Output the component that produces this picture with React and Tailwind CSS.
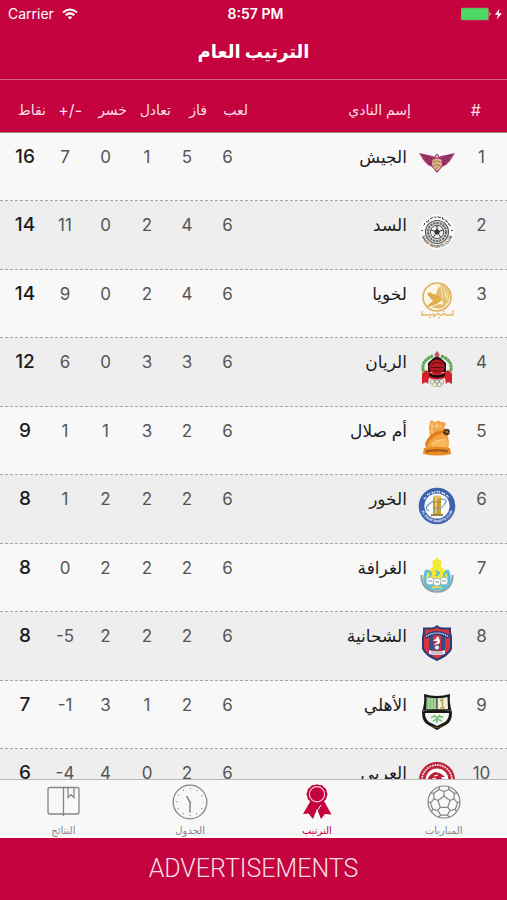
import React from "react";

function Logo({ label, children }) {
  return (
    <svg viewBox="0 0 38 38" className="mx-auto block size-[38px]" role="img" aria-label={label}>
      {children}
    </svg>
  );
}

function ElJaish() {
  return (
    <Logo label="الجيش">
      <path d="M1 8 L15 11 L17 12 L19 8 L21 12 L23 11 L37 8 L32 16 L28 20 L24 22 L19 28 L14 22 L10 20 L6 16 Z" fill="#a33a6c" />
      <path d="M4 10 L14 14 M7 14 L14 17 M10 18 L14 19 M34 10 L24 14 M31 14 L24 17 M28 18 L24 19" stroke="#7d2450" strokeWidth="1" />
      <circle cx="19" cy="12" r="2.4" fill="#b0527c" />
      <circle cx="19" cy="11.5" r="1" fill="#f0dde4" />
      <path d="M14.5 15 Q19 12.500 23.500 15 L24 20 Q22 24 19 26 Q16 24 14 20 Z" fill="#d9b48a" />
      <path d="M15 17 Q19 15 23 17 M15.500 21 Q19 18 22.500 21 M18 24 L20 22" stroke="#a5683f" strokeWidth=".8" fill="none" />
    </Logo>
  );
}

function AlSadd() {
  return (
    <Logo label="السد">
      <defs>
        <path id="sadd-low" d="M3.200 19 A15.800 15.800 0 0 0 34.800 19" />
      </defs>
      <circle cx="19" cy="19" r="17.500" fill="#fbfbfb" />
      <circle cx="19" cy="19" r="11.500" fill="#d5d5d5" stroke="#5a5a5a" strokeWidth="1.200" />
      <circle cx="19" cy="19" r="9" fill="none" stroke="#666" strokeWidth="2" strokeDasharray="2.200 1" />
      <circle cx="19" cy="19" r="6.600" fill="#f1f1f1" stroke="#444" strokeWidth=".9" />
      <path d="M19 15.800 L22 18 L20.900 21.500 H17.100 L16 18 Z" fill="#333" />
      <path d="M19 16 V12.500 M22 18 L25.200 17 M20.800 21.500 L22.800 24.300 M17.200 21.500 L15.200 24.300 M16 18 L12.800 17" stroke="#333" strokeWidth="1" />
      <text fontSize="4" fontWeight="700" fontFamily="Liberation Sans, sans-serif" fill="#3d3d3d">
        <textPath href="#sadd-low" startOffset="50%" textAnchor="middle">SADD SPORTS CLUB</textPath>
      </text>
      <path d="M5.500 12.500 q1.500 -1 1 -2.500 M8 8.500 l2 .5 1 -2.500 M12 5.500 q2 1 2.500 -1.500 M16 3.500 q.5 2 2.500 .5 M20 3 l.5 1.500 2.500 -.2 M24.500 4 l0 2 2 .5 M28 6.500 l0 2 2 .5 M30.500 10 l.5 2 1.800 .5" fill="none" stroke="#444" strokeWidth="1" />
      <circle cx="4" cy="17.500" r=".8" fill="#333" />
      <circle cx="34" cy="17.500" r=".8" fill="#333" />
    </Logo>
  );
}

function Lekhwiya() {
  return (
    <Logo label="لخويا">
      <circle cx="19" cy="15" r="14" fill="#fbf5e6" stroke="#dfb057" strokeWidth="1.600" />
      <path d="M18 13 Q19 7 22 4 L24 2 Q30 5 31.500 12 Q32 18 28 23 L23 27 Q26 21 24 18 Z" fill="#e7bf70" />
      <path d="M23 4 L25 16 M26 4.500 L28 16 M29 9 L29 18" stroke="#fbf0d2" strokeWidth=".7" />
      <path d="M9 12 L12 10 L15 12 L20 13 L24 18 L19 22 L13 24 L8 26 L11 22 L15 19 Z" fill="#e0ac4c" />
      <path d="M13 25 L22 22 L27 24 L21 27 Z" fill="#e5ba66" />
      <path d="M35 28 V33 H27 Q27 31 25.500 31.500 Q24 34 21.500 33 Q20 30 18 33 L15.500 35 Q17.500 33 15.500 32 L14 33 H4 V29" fill="none" stroke="#e2b65f" strokeWidth="1.300" />
      <path d="M25 29.500 h1.200 M20 35.500 h2 M11 35.500 h2" stroke="#e2b65f" strokeWidth="1.200" />
    </Logo>
  );
}

function AlRayyan() {
  return (
    <Logo label="الريان">
      <path d="M15 6 C3 10 3 20 8 26" fill="none" stroke="#58a54c" strokeWidth="3" strokeDasharray="3 .4" />
      <path d="M23 6 C35 10 35 20 30 26" fill="none" stroke="#58a54c" strokeWidth="3" strokeDasharray="3 .4" />
      <path d="M19 1 L21.500 4 L21 8 H17 L16.500 4 Z" fill="#c55a6c" />
      <path d="M15.500 8 Q19 6 22.500 8 L28 13 V22 H10 V13 Z" fill="#2a1313" />
      <circle cx="19" cy="17" r="7.600" fill="#b81a22" />
      <path d="M14 14 Q19 11 24 14 M13 17.500 H25 M15 21 H23" stroke="#541013" strokeWidth="1.200" fill="none" />
      <path d="M8 20 Q19 28 30 20 L34 24 L34 34 L30 32 L28 34 L27 28 Q19 31 11 28 L10 34 L8 32 L4 34 L4 24 Z" fill="#d5202a" />
      <path d="M11 23 Q19 27.500 27 23 L27 26 Q19 30 11 26 Z" fill="#221010" />
      <g fill="#fff" fillOpacity=".6" strokeWidth=".8">
        <circle cx="14.500" cy="32" r="2.300" stroke="#6f8b95" />
        <circle cx="19" cy="32" r="2.300" stroke="#555" />
        <circle cx="23.500" cy="32" r="2.300" stroke="#bf6a6a" />
        <circle cx="16.800" cy="34.300" r="2.300" stroke="#b5a55e" />
        <circle cx="21.200" cy="34.300" r="2.300" stroke="#629867" />
      </g>
    </Logo>
  );
}

function UmmSalal() {
  return (
    <Logo label="أم صلال">
      <path d="M12 3 L14 1 L16 3 L18 3 L20 1 L22 3 L26 3 L28 5 L26 9 L27 13 L30 17 L31 24 L30 30 H8 L7 24 L12 17 L11 9 Z" fill="#f3a545" />
      <path d="M14 7 H24 M14 4 V14 M19 4 V10 M14 25 Q20 20 28 21" stroke="#fbd48f" strokeWidth="1.200" fill="none" />
      <path d="M30 13 Q19 9 11 18 Q5 25 9 29 Q10 21 18 17 Q24 14 30 13" fill="#e47d1f" />
      <path d="M13 28 Q20 20 30 22 L29 28 Z" fill="#f9b95a" />
      <circle cx="28.500" cy="13" r="3.200" fill="#3c2411" />
      <path d="M28.500 10 L29.500 13 L27 15 M26 12 L31 14" stroke="#d59b4f" strokeWidth=".7" fill="none" />
      <path d="M6 29 Q19 26 32 29 L33 35 Q19 38 5 35 Z" fill="#e98b27" />
      <path d="M8 32.500 Q19 30 30 32.500" stroke="#8e4a12" strokeWidth="2.400" strokeDasharray="1.300 .5" fill="none" />
    </Logo>
  );
}

function AlKhor() {
  return (
    <Logo label="الخور">
      <defs>
        <path id="khor-low" d="M2.800 19 A16.200 16.200 0 0 0 35.200 19" />
      </defs>
      <circle cx="19" cy="19" r="18.300" fill="#3d62ae" />
      <circle cx="19" cy="19" r="12.600" fill="#f8f9fa" />
      <path d="M6 12 L8 10 M9 8 L12 6.500 M13.500 6 L17 5 M18.500 4.500 L22 5 M23.500 5.500 L27 7 M28.500 8 L30.500 10.500" stroke="#e8eef9" strokeWidth="1.700" strokeDasharray="1.600 .6" />
      <text fontSize="3.400" fontWeight="700" fontFamily="Liberation Sans, sans-serif" fill="#edf3ff">
        <textPath href="#khor-low" startOffset="50%" textAnchor="middle">AL KHOR SPORTS CLUB</textPath>
      </text>
      <path d="M11 24 Q6 22 10 18 Q15 13 24 12 Q30 12 27 17" fill="none" stroke="#6c8fd0" strokeWidth="1.200" />
      <rect x="15" y="10" width="8" height="17" fill="#c4a032" />
      <ellipse cx="19" cy="10" rx="4" ry="1.400" fill="#ddc36a" />
      <path d="M18 11 V26" stroke="#ecd98a" strokeWidth="1.600" />
      <path d="M15 15 H23 M15 21 H23" stroke="#967420" strokeWidth=".7" />
      <rect x="13" y="27" width="12" height="2" fill="#97844c" />
      <path d="M16 24 Q25 22 28 14" fill="none" stroke="#8aaddb" strokeWidth="1.100" />
    </Logo>
  );
}

function AlGharafa() {
  return (
    <Logo label="الغرافة">
      <path d="M7 14 Q2 29 11 33 Q19 36 27 33 Q36 29 31 14 Z" fill="#5fc0dd" />
      <path d="M3.500 19 Q3 30 11 34 Q19 37.500 27 34 Q35 30 34.500 19" fill="none" stroke="#8fa2a6" strokeWidth="2" />
      <path d="M10 15 L14 12 L15 10 Q13 5 17 3.500 L19 1 L21 3.500 Q25 5 23 10 L24 12 L28 15 L30 22 L25 27 H12 L8 22 Z" fill="#f6e936" />
      <path d="M9 14 L13 17 L12 21 M29 15 L26 18 L27 22 M18 15 L21 17 L18 20" stroke="#53b8d8" strokeWidth="1.800" fill="none" />
      <g fill="#f8fafa" stroke="#8fa3a8" strokeWidth=".7">
        <circle cx="12" cy="25" r="4" />
        <circle cx="26" cy="25" r="4" />
        <circle cx="19" cy="26" r="4" />
      </g>
      <path d="M10 25 H14 M17 26 H21 M24 25 H28" stroke="#819398" strokeWidth="1" />
      <path d="M14 32 Q19 30 24 32" stroke="#e4d84e" strokeWidth="2" fill="none" />
    </Logo>
  );
}

function AlShahaniya() {
  return (
    <Logo label="الشحانية">
      <path d="M19 1 Q22 4 26 3.500 H33 V8 L34 13 V25 Q31 32 19 37 Q7 32 4 25 V13 L5 8 V3.500 H12 Q16 4 19 1 Z" fill="#263e77" />
      <path d="M19 3.500 Q22 6 27 5.500 H31 V9 L32 13 V24.500 Q29 30 19 34.700 Q9 30 6 24.500 V13 L7 9 V5.500 H11 Q16 6 19 3.500 Z" fill="#d8333f" />
      <path d="M11 10 H15 V32 L11 30 Z M23 10 H27 V30 L23 32 Z" fill="#354c87" />
      <path d="M7 13 Q19 5 31 13" fill="none" stroke="#2c427c" strokeWidth="4" />
      <path d="M8 12.500 Q19 5.500 30 12.500" fill="none" stroke="#f4eef2" strokeWidth="1.200" strokeDasharray="1.200 .8" />
      <path d="M20 12 Q18 15 15 17 L20 17 L16 21 Q22 21 22 17 Z" fill="#fff" />
      <circle cx="19" cy="23.500" r="2.700" fill="#e4edf5" stroke="#283e70" />
      <path d="M11 26 Q19 29 27 26 V30 Q19 32 11 30 Z" fill="#ececf1" />
      <path d="M13 28.500 Q19 30.500 25 28.500" fill="none" stroke="#83829c" strokeWidth=".8" />
    </Logo>
  );
}

function AlAhli() {
  return (
    <Logo label="الأهلي">
      <path d="M6 1 Q19 5 32 1 Q31 10 34 19 Q34 29 28 32 L19 37 L10 32 Q4 29 4 19 Q7 10 6 1 Z" fill="#171a16" />
      <path d="M8.500 4 Q14 5.500 18.500 5 V16 H8 Z" fill="#85bd7b" />
      <path d="M19.500 5 Q25 5.500 29.500 4 L30 16 H19.500 Z" fill="#eef0e5" />
      <path d="M11 5 V16 M14 5 V16 M17 5 V16" stroke="#d9edcf" strokeWidth=".8" />
      <path d="M22 8 L24.500 6.500 V15 M22 15 H27" fill="none" stroke="#c3a04e" strokeWidth="1.600" />
      <path d="M5 18 Q19 14 33 18" fill="none" stroke="#e0d5a8" strokeWidth=".7" strokeDasharray="1 .6" />
      <path d="M7 20 H31 Q31 26 27 29 L19 33 L11 29 Q7 26 7 20 Z" fill="#f5f8f2" />
      <path d="M19 30 V25 M13 25 Q16 22 19 25 Q22 22 25 25 M15 28 L19 26 L24 28 M19 25 L16 22 M20 24 L22 22" fill="none" stroke="#78bd79" strokeWidth="1.700" />
      <path d="M9 31 Q19 38 29 31" fill="none" stroke="#c1a85a" strokeWidth=".8" strokeDasharray="1 1" />
    </Logo>
  );
}

function AlArabi() {
  return (
    <Logo label="العربي">
      <circle cx="19" cy="19" r="18" fill="#bd233a" />
      <circle cx="19" cy="19" r="15" fill="none" stroke="#f4d9dc" strokeWidth="1.800" strokeDasharray="1.800 .8" />
      <circle cx="19" cy="19" r="11.500" fill="#fff" />
      <path d="M9 23 Q9 14 17 11 L22 12 L27 16 L23 16 L26 21 L23 28 H12 Z" fill="#bb1f36" />
      <path d="M16 15 L20 14 M14 18 L18 17" stroke="#fff" strokeWidth="1" />
    </Logo>
  );
}

const TEAMS = [
  { name: "الجيش", logo: ElJaish, played: 6, won: 5, drawn: 1, lost: 0, diff: "7", points: 16 },
  { name: "السد", logo: AlSadd, played: 6, won: 4, drawn: 2, lost: 0, diff: "11", points: 14 },
  { name: "لخويا", logo: Lekhwiya, played: 6, won: 4, drawn: 2, lost: 0, diff: "9", points: 14 },
  { name: "الريان", logo: AlRayyan, played: 6, won: 3, drawn: 3, lost: 0, diff: "6", points: 12 },
  { name: "أم صلال", logo: UmmSalal, played: 6, won: 2, drawn: 3, lost: 1, diff: "1", points: 9 },
  { name: "الخور", logo: AlKhor, played: 6, won: 2, drawn: 2, lost: 2, diff: "1", points: 8 },
  { name: "الغرافة", logo: AlGharafa, played: 6, won: 2, drawn: 2, lost: 2, diff: "0", points: 8 },
  { name: "الشحانية", logo: AlShahaniya, played: 6, won: 2, drawn: 2, lost: 2, diff: "-5", points: 8 },
  { name: "الأهلي", logo: AlAhli, played: 6, won: 2, drawn: 1, lost: 3, diff: "-1", points: 7 },
  { name: "العربي", logo: AlArabi, played: 6, won: 2, drawn: 0, lost: 4, diff: "-4", points: 6 },
];

function StatusBar() {
  return (
    <div dir="ltr" className="grid h-7 grid-cols-3 items-center pr-1 pl-2 text-sm leading-4">
      <div className="flex items-center gap-2">
        <span>Carrier</span>
        <svg viewBox="0 0 16 12" className="h-3 w-4" fill="none" stroke="white" strokeWidth="2" aria-hidden="true">
          <path d="M1 4.500 Q8 -1.500 15 4.500" />
          <path d="M3.600 7.300 Q8 3.500 12.400 7.300" />
          <path d="M8 11.500 L5.800 9.200 Q8 7.400 10.200 9.200 Z" fill="white" stroke="none" />
        </svg>
      </div>
      <span className="text-center font-semibold">8:57 PM</span>
      <svg viewBox="0 0 42 14" className="h-3.5 w-[42px] justify-self-end" aria-hidden="true">
        <rect x="0" y="1" width="27.500" height="12" rx="1.500" fill="#4cd964" stroke="#a5846e" strokeWidth=".6" />
        <path d="M28.500 5 Q31 7 28.500 9 Z" fill="#f2c5d1" />
        <path d="M38.500 1.500 L34 7.700 H37 L35.600 12.500 L41 6.300 H37.600 Z" fill="white" />
      </svg>
    </div>
  );
}

const HEAD = "pb-2 text-right align-middle font-normal whitespace-nowrap";
const NUM = "pt-3 text-center align-top";

function Standings() {
  return (
    <table className="w-full table-fixed border-separate border-spacing-0">
      <colgroup>
        <col className="w-[51px]" />
        <col className="w-[38px]" />
        <col />
        <col className="w-[41px]" />
        <col className="w-[36px]" />
        <col className="w-[44px]" />
        <col className="w-[43px]" />
        <col className="w-[38px]" />
        <col className="w-[46px]" />
      </colgroup>
      <thead className="sticky top-0 z-10 bg-[#c4033f] text-sm leading-5 text-[#fbdfe8]">
        <tr className="h-[54px] [&>th]:border-y [&>th]:border-t-[#d8638a] [&>th]:border-b-[#a08a72] [&>th]:pt-4">
          <th scope="col" className={HEAD + " pr-[26px] text-base"}>#</th>
          <th scope="col" colSpan={2} className={HEAD + " pr-[45px]"}>إسم النادي</th>
          <th scope="col" className={HEAD}>لعب</th>
          <th scope="col" className={HEAD}>فاز</th>
          <th scope="col" className={HEAD}>تعادل</th>
          <th scope="col" className={HEAD}>خسر</th>
          <th scope="col" dir="ltr" className={HEAD + " pr-0.5 text-base"}>+/-</th>
          <th scope="col" className={HEAD}>نقاط</th>
        </tr>
      </thead>
      <tbody className="text-[17px] leading-6 text-[#555]">
        {TEAMS.map((t, i) => {
          const Crest = t.logo;
          return (
            <tr
              key={t.name}
              className="h-[68px] bg-[repeating-linear-gradient(to_right,#a6a6a6_0_3px,transparent_3px_5px)] bg-[length:100%_1px] bg-bottom bg-no-repeat odd:bg-[#f8f8f8] even:h-[69px] even:bg-[#eeeeee]"
            >
              <td className={NUM}>{i + 1}</td>
              <td className="pt-3 align-top"><Crest /></td>
              <td className="pt-3 pr-[11px] text-right align-top whitespace-nowrap text-[#1c1c1c]">{t.name}</td>
              <td className={NUM}>{t.played}</td>
              <td className={NUM + " pr-1"}>{t.won}</td>
              <td className={NUM + " pr-1"}>{t.drawn}</td>
              <td className={NUM}>{t.lost}</td>
              <td dir="ltr" className={NUM}>{t.diff}</td>
              <td className={NUM + " pl-1 text-[19px] leading-6 font-medium text-[#1c1c1c]"}>{t.points}</td>
            </tr>
          );
        })}
      </tbody>
    </table>
  );
}

function BallIcon() {
  return (
    <svg viewBox="0 0 36 36" className="size-9" fill="none" stroke="currentColor" strokeWidth="1.200" strokeLinejoin="round" aria-hidden="true">
      <circle cx="18" cy="18" r="16" />
      <path d="M18 12 L24 16.500 L21.800 23.300 H14.200 L12 16.500 Z" />
      <path d="M18 12 V7.500 M24 16.500 L28 14.800 M12 16.500 L8 14.800 M21.800 23.300 L24.200 26.500 M14.200 23.300 L11.800 26.500" />
      <path d="M13.600 2.600 L12.900 5.500 L18 7.500 L23.100 5.500 L22.400 2.600" />
      <path d="M31.300 9.100 L28.300 9.300 L28 14.800 L31.500 18.900 L34 17.400" />
      <path d="M4.700 9.100 L7.700 9.300 L8 14.800 L4.500 18.900 L2 17.400" />
      <path d="M30.600 27.900 L29.400 25.200 L24.200 26.500 L21.300 31.100 L23.500 33" />
      <path d="M5.400 27.900 L6.600 25.200 L11.800 26.500 L14.700 31.100 L12.500 33" />
      <path d="M23.100 5.500 L28.300 9.300 M12.900 5.500 L7.700 9.300 M31.500 18.900 L29.400 25.200 M4.500 18.900 L6.600 25.200 M14.700 31.100 H21.300" />
    </svg>
  );
}

function RosetteIcon() {
  return (
    <svg viewBox="0 0 36 36" className="size-9" aria-hidden="true">
      <path d="M11.500 17 L4 30 L9.500 29.500 L14 35 L18 25 L22 35 L26 30 L32.500 30.500 L25 17 Z" fill="currentColor" />
      <path d="M17.500 28 L22 21" stroke="#f8f8f8" strokeWidth="1" />
      <path d="M18 .3 l2.500 .7 2.700 .3 1.700 1.900 2.100 1.600 .7 2.800 .9 2.600 -.9 2.600 -.7 2.800 -2.100 1.600 -1.700 1.900 -2.700 .3 -2.500 .8 -2.500 -.8 -2.700 -.3 -1.700 -1.900 -2.100 -1.600 -.7 -2.800 -.9 -2.600 .9 -2.600 .7 -2.800 2.100 -1.600 1.700 -1.900 2.700 -.3 Z" fill="currentColor" />
      <circle cx="18" cy="10.200" r="7.600" fill="none" stroke="#f5c9d6" strokeWidth="1.200" />
    </svg>
  );
}

function ClockIcon() {
  return (
    <svg viewBox="0 0 36 36" className="size-9" fill="none" stroke="currentColor" aria-hidden="true">
      <circle cx="18" cy="18" r="16.800" strokeWidth="1.300" />
      <circle cx="18" cy="18" r="13.500" strokeWidth="1.300" strokeDasharray="1 6.070" strokeDashoffset=".5" />
      <path d="M14.500 12 L18 18 V28.500" strokeWidth="1.500" />
      <circle cx="18" cy="18" r="1" fill="currentColor" stroke="none" />
    </svg>
  );
}

function BookIcon() {
  return (
    <svg viewBox="0 0 36 36" className="size-9" fill="none" stroke="currentColor" strokeWidth="1.300" aria-hidden="true">
      <rect x="3" y="3.500" width="31" height="26.500" rx="2" />
      <path d="M18.500 3.500 V32 M23 3.500 V13.500 L26 10.700 L29 13.500 V3.500" />
    </svg>
  );
}

const TABS = [
  { label: "المباريات", icon: BallIcon },
  { label: "الترتيب", icon: RosetteIcon, active: true },
  { label: "الجدول", icon: ClockIcon },
  { label: "النتائج", icon: BookIcon },
];

export default function App() {
  return (
    <div dir="rtl" className="flex h-screen flex-col overflow-hidden bg-[#f8f8f8] font-['Inter','DejaVu_Sans',sans-serif]">
      <header className="bg-[#c4033f] text-white">
        <StatusBar />
        <h1 className="h-[51px] pt-2 text-center text-lg leading-8 font-bold">الترتيب العام</h1>
      </header>
      <main className="min-h-0 flex-1 overflow-y-auto [scrollbar-width:none]">
        <Standings />
      </main>
      <nav className="grid h-[59px] grid-cols-4 border-t border-[#b8b8b8] bg-[#f8f8f8]">
        {TABS.map(({ label, icon: Icon, active }) => (
          <button
            key={label}
            type="button"
            aria-current={active ? "page" : undefined}
            className={"flex flex-col items-center pt-1 text-[10px] leading-5 " + (active ? "text-[#c4033f]" : "text-[#858585]")}
          >
            <Icon />
            <span>{label}</span>
          </button>
        ))}
      </nav>
      <footer dir="ltr" className="h-[62px] bg-[#c4033f] text-center font-['Roboto','Liberation_Sans',sans-serif] text-[25px] leading-[62px] font-light text-[#fbdfe8]">
        ADVERTISEMENTS
      </footer>
    </div>
  );
}
